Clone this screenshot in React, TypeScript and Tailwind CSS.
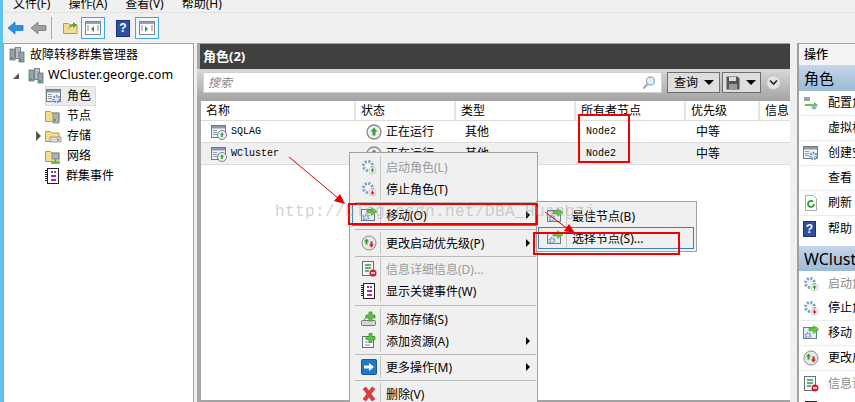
import type { ReactNode } from 'react'

const mono = "font-['Liberation_Mono','Noto_Sans_CJK_SC',monospace]"

function Window({ children }: { children?: ReactNode }) {
  return (
    <svg width="16" height="16" viewBox="0 0 16 16">
      <rect x="0.5" y="1.5" width="14" height="12" fill="#f4f4f4" stroke="#6f7b88" />
      <rect x="1" y="2" width="13" height="2.5" fill="#8d99a6" />
      <rect x="2" y="6" width="4" height="1" fill="#8d99a6" />
      <rect x="2" y="8" width="4" height="1" fill="#8d99a6" />
      <rect x="2" y="10" width="4" height="1" fill="#8d99a6" />
      {children}
    </svg>
  )
}

function RoleRunning() {
  return (
    <Window>
      <circle cx="11" cy="11" r="4.5" fill="#e8eef2" stroke="#75818d" />
      <path d="M11 8.5l2 2.2h-1.2V13h-1.6v-2.3H9z" fill="#2f9a2f" />
    </Window>
  )
}

function RoleGear() {
  return (
    <Window>
      <circle cx="10.5" cy="11" r="3" fill="#dfe9f3" stroke="#6f94b8" strokeWidth="2.4" strokeDasharray="1.6 1" />
    </Window>
  )
}

function MoveIcon() {
  return (
    <svg width="16" height="16" viewBox="0 0 16 16">
      <rect x="0.5" y="2.5" width="13" height="11" fill="#e9edf1" stroke="#6f7b88" />
      <circle cx="5" cy="10.5" r="2.4" fill="#dfe9f3" stroke="#6f94b8" strokeWidth="2" strokeDasharray="1.4 0.9" />
      <path d="M6 3h4.5V0.5L16 4.5l-5.5 4V6H6z" fill="#61c83c" stroke="#3d9a25" strokeWidth="0.5" />
    </svg>
  )
}

function GearBadge({ down }: { down?: boolean }) {
  return (
    <svg width="16" height="16" viewBox="0 0 16 16">
      <circle cx="7" cy="7" r="4.5" fill="#f2f6fa" stroke="#7f9dbd" strokeWidth="3" strokeDasharray="2 1.500" />
      <circle cx="11.5" cy="11.5" r="3.5" fill="#fff" stroke="#c8c8c8" />
      {down ? <path d="M11.5 14l-2.2-2.6h1.4V9.5h1.6v1.9h1.4z" fill="#c8232c" /> : <path d="M11.5 9l2.2 2.6h-1.4v1.9h-1.6v-1.9H9.3z" fill="#2f9a2f" />}
    </svg>
  )
}

function Servers({ w = 16 }: { w?: number }) {
  return (
    <svg width={w} height={w} viewBox="0 0 16 16">
      <rect x="1" y="2" width="5" height="11" fill="#9aa3ab" stroke="#59626a" strokeWidth="0.7" />
      <rect x="6.5" y="0.5" width="5" height="11" fill="#b5bcc3" stroke="#59626a" strokeWidth="0.7" />
      <rect x="10" y="5" width="5" height="10" fill="#9aa3ab" stroke="#59626a" strokeWidth="0.7" />
      <rect x="11" y="12" width="2" height="2" fill="#3db03d" />
      <rect x="2" y="10" width="2" height="2" fill="#3db03d" />
    </svg>
  )
}

function Folder({ children }: { children?: ReactNode }) {
  return (
    <svg width="17" height="16" viewBox="0 0 17 16">
      <path d="M0.5 3.5V13.5H14V5H7L5.5 3.5z" fill="#f5dc8e" stroke="#b99a48" />
      {children}
    </svg>
  )
}

function EventLog() {
  return (
    <svg width="16" height="16" viewBox="0 0 16 16">
      <rect x="2.5" y="0.5" width="11" height="15" fill="#fff" stroke="#222" />
      <path d="M1 2v12" stroke="#222" strokeWidth="2" strokeDasharray="1 1" />
      <rect x="6" y="3" width="2" height="2" fill="#c22" />
      <rect x="9" y="3" width="2" height="2" fill="#36c" />
      <rect x="6" y="7" width="5" height="2" fill="#83c" />
      <rect x="6" y="11" width="5" height="2" fill="#c2a" />
    </svg>
  )
}

function Info() {
  return (
    <svg width="16" height="16" viewBox="0 0 16 16">
      <rect x="1.5" y="0.5" width="11" height="14" fill="#f6f6f6" stroke="#66727e" />
      <path d="M4 4h6M4 7h6M4 10h4" stroke="#3f8f5a" strokeWidth="1.3" />
      <circle cx="12" cy="12" r="3.5" fill="#c8232c" />
      <rect x="10" y="11.3" width="4" height="1.4" fill="#fff" />
    </svg>
  )
}

function Priority() {
  return (
    <svg width="16" height="16" viewBox="0 0 16 16">
      <circle cx="8" cy="8" r="7" fill="#e8e8e8" stroke="#8a8a8a" />
      <path d="M5.5 3.5l2.5 3H6.5v3h-2v-3H3z" fill="#2f9a2f" />
      <path d="M10.5 12.5l-2.5-3h1.500v-3h2v3H13z" fill="#c8232c" />
    </svg>
  )
}

function Help({ size = 16 }: { size?: number }) {
  return (
    <div className="flex items-center justify-center bg-[#2f4f9f] border border-[#1c3474] text-white font-bold text-[12px] leading-none font-['Liberation_Sans',sans-serif]" style={{ width: size - 3, height: size }}>
      ?
    </div>
  )
}

function AddStorage() {
  return (
    <svg width="16" height="16" viewBox="0 0 16 16">
      <rect x="0.5" y="9.500" width="14" height="5" rx="1" fill="#d6d6d6" stroke="#777" />
      <path d="M3 9.500L5 6h4" fill="none" stroke="#777" />
      <path d="M8 1h3v3h3v3h-3v3H8V7H5V4h3z" fill="#5fc43e" stroke="#2f8f22" strokeWidth="0.7" />
    </svg>
  )
}

function AddResource() {
  return (
    <svg width="16" height="16" viewBox="0 0 16 16">
      <rect x="1.500" y="3.500" width="11" height="11" fill="#f6f6f6" stroke="#66727e" />
      <path d="M4 9h5M4 12h5" stroke="#8d99a6" />
      <path d="M8 0.500h3v3h3v3h-3v3H8v-3H5v-3h3z" fill="#5fc43e" stroke="#2f8f22" strokeWidth="0.7" />
    </svg>
  )
}

function MoreOps() {
  return (
    <svg width="16" height="16" viewBox="0 0 16 16">
      <rect x="0.500" y="0.500" width="15" height="15" rx="1" fill="#1f78c8" stroke="#125a9c" />
      <path d="M3 6.500h5V4l5 4-5 4V9.500H3z" fill="#fff" />
    </svg>
  )
}

function Delete() {
  return (
    <svg width="16" height="16" viewBox="0 0 16 16">
      <path d="M2 3l3-2 3 4 3-4 3 2-4 5 4 5-3 2-3-4-3 4-3-2 4-5z" fill="#d8403a" stroke="#a8251f" strokeWidth="0.5" />
    </svg>
  )
}

function Arrow({ color }: { color: string }) {
  return (
    <svg width="18" height="16" viewBox="0 0 18 16">
      <path d="M1 8l7-6v3.500h8v5H8V14z" fill={color} stroke={color === '#a0a0a0' ? '#6d6d6d' : '#1a6cc0'} strokeWidth="0.7" />
    </svg>
  )
}

const SubArrow = () => <span className="ml-auto mr-[6px] w-0 h-0 border-y-[4px] border-y-transparent border-l-[4px] border-l-black" />

function MenuItem({ icon, label, disabled, sub, hot }: { icon: ReactNode; label: string; disabled?: boolean; sub?: boolean; hot?: boolean }) {
  return (
    <div className={`flex items-center h-[22px] ${hot ? 'outline outline-[#3f83b5] -outline-offset-1' : ''}`}>
      <span className="w-[28px] pl-[5px] flex items-center justify-center shrink-0">{icon}</span>
      <span className="w-px h-full bg-[#c4c4c4] mr-[5px] shrink-0" />
      <span className={`text-[12px] pt-[1px] ${disabled ? 'text-[#9a9a9a]' : 'text-black'}`}>{label}</span>
      {sub && <SubArrow />}
    </div>
  )
}

const MenuSep = ({ h }: { h: string }) => (
  <div className={`flex items-center ml-[3px] ${h}`}>
    <div className="h-px w-full bg-[#b8b8b8]" />
  </div>
)

function TreeRow({ indent, icon, label, caret, selected }: { indent: string; icon: ReactNode; label: string; caret?: ReactNode; selected?: boolean }) {
  return (
    <div className={`flex items-center h-[20px] ${indent}`}>
      <span className="w-[14px] flex justify-center shrink-0">{caret}</span>
      <span className={`flex items-center gap-[3px] pr-[4px] h-[20px] ${selected ? 'bg-[#ececec] border border-[#dadada]' : ''}`}>
        {icon}
        <span className="text-[12px] ml-[2px] whitespace-nowrap">{label}</span>
      </span>
    </div>
  )
}

const cols = 'grid grid-cols-[155px_100px_120px_110px_74px_1fr]'

function RoleRow({ name, alt }: { name: string; alt?: boolean }) {
  return (
    <div className={`${cols} h-[22px] items-center border-b border-[#dcdcdc] text-[12px] ${alt ? 'bg-[#f0f0f0]' : 'bg-white'}`}>
      <div className="flex items-center pl-[10px] gap-[4px]">
        <RoleRunning />
        <span className={`${mono} text-[10px]`}>{name}</span>
      </div>
      <div className="flex items-center pl-[10px] gap-[4px]">
        <svg width="16" height="16" viewBox="0 0 16 16">
          <circle cx="8" cy="8" r="7" fill="#eee" stroke="#8a8a8a" strokeWidth="1.300" />
          <path d="M8 3.500l3.500 4H9.500v4h-3v-4h-2z" fill="#3f9f3f" />
        </svg>
        <span>正在运行</span>
      </div>
      <div className="pl-[9px]">其他</div>
      <div className={`pl-[10px] ${mono} text-[10px]`}>Node2</div>
      <div className="pl-[10px]">中等</div>
      <div />
    </div>
  )
}

function ActionRow({ icon, label, muted, line }: { icon?: ReactNode; label: string; muted?: boolean; line?: boolean }) {
  return (
    <div className={`flex items-center h-[25px] pl-[4px] ${line ? 'border-b border-[#ececec]' : ''}`}>
      <span className="w-[25px] flex shrink-0">{icon}</span>
      <span className={`text-[12px] whitespace-nowrap ${muted ? 'text-[#8a8a8a]' : 'text-black'}`}>{label}</span>
    </div>
  )
}

function ToolFrame({ children }: { children: ReactNode }) {
  return <div className="w-[24px] h-[22px] border border-[#3fa9dc] bg-[#eef6fb] flex items-center justify-center">{children}</div>
}

function PaneIcon({ left }: { left?: boolean }) {
  return (
    <svg width="16" height="14" viewBox="0 0 16 14">
      <rect x="0.500" y="0.500" width="15" height="13" fill="#fff" stroke="#7c8790" />
      <rect x="1" y="1" width="14" height="2" fill="#9aa3ab" />
      {left ? <path d="M9 5v6l-3-3z" fill="#2f9a2f" /> : <path d="M6 5v6l3-3z" fill="#2f9a2f" />}
      <path d="M2 5h2M2 7h2M2 9h2M12 5h2M12 7h2M12 9h2" stroke="#7c8790" />
    </svg>
  )
}

export default function App() {
  return (
    <div className="relative w-[855px] h-[402px] overflow-hidden flex bg-[#f0f0f0] text-black font-['Noto_Sans','Noto_Sans_CJK_SC',sans-serif]">
      <div className="w-[3px] bg-[#62c3e8] shrink-0" />
      <div className="flex-1 min-w-0 flex flex-col">
        {/* Menu bar, cut off by the top of the shot */}
        <div className="h-[12px] overflow-hidden flex gap-[18px] pl-[10px] items-end text-[12px] leading-[16px]">
          <span>文件(F)</span>
          <span>操作(A)</span>
          <span>查看(V)</span>
          <span>帮助(H)</span>
        </div>
        <div className="h-[31px] flex items-center border-t border-[#e2e2e2] pl-[4px]">
          <Arrow color="#2f8fe0" />
          <span className="ml-[5px]"><Arrow color="#a0a0a0" /></span>
          <span className="w-px h-[22px] bg-[#a8a8a8] ml-[3px]" />
          <span className="ml-[11px]">
            <Folder>
              <path d="M5 10c1-4 3-6 5-6V2l4 3-4 3V6c-2 0-3 1-5 4z" fill="#3da83d" />
            </Folder>
          </span>
          <span className="ml-[1px]"><ToolFrame><PaneIcon left /></ToolFrame></span>
          <span className="ml-[11px]"><Help size={17} /></span>
          <span className="ml-[5px]"><ToolFrame><PaneIcon /></ToolFrame></span>
        </div>

        <div className="flex-1 min-h-0 flex">
          {/* Tree */}
          <div className="w-[191px] shrink-0 bg-white border-t border-l border-r border-[#a0a0a0] pt-[1px]">
            <div className="flex items-center h-[20px] pl-[5px] gap-[5px]">
              <Servers />
              <span className="text-[12px]">故障转移群集管理器</span>
            </div>
            <div className="flex items-center h-[21px] pl-[9px]">
              <span className="w-0 h-0 border-l-[6px] border-l-transparent border-b-[6px] border-b-[#555] mr-[9px]" />
              <Servers />
              <span className="text-[12.5px] ml-[4px] whitespace-nowrap">WCluster.george.com</span>
            </div>
            <TreeRow indent="pl-[27px]" icon={<RoleGear />} label="角色" selected />
            <TreeRow indent="pl-[27px]" icon={<Folder><rect x="8" y="5" width="6" height="10" fill="#aab2ba" stroke="#666" strokeWidth="0.600" /><rect x="9" y="11" width="2" height="2" fill="#3db03d" /></Folder>} label="节点" />
            <TreeRow
              indent="pl-[27px]"
              icon={<Folder><rect x="5" y="9" width="11" height="5" fill="#d8d8d8" stroke="#777" strokeWidth="0.600" /><rect x="12" y="11" width="2" height="1.500" fill="#3db03d" /></Folder>}
              label="存储"
              caret={<span className="w-0 h-0 border-y-[5px] border-y-transparent border-l-[5px] border-l-[#555]" />}
            />
            <TreeRow indent="pl-[27px]" icon={<Folder><rect x="7" y="5" width="7" height="6" fill="#aab2ba" stroke="#666" strokeWidth="0.600" /><path d="M10.500 11v3M6 15h9" stroke="#2fae3f" strokeWidth="1.300" /></Folder>} label="网络" />
            <TreeRow indent="pl-[27px]" icon={<EventLog />} label="群集事件" />
          </div>

          {/* Middle pane */}
          <div className="ml-[3px] w-[593px] shrink-0 flex flex-col bg-[#a6a6a6] pl-[4px] border-t border-[#a0a0a0]">
            <div className="-ml-[1px] h-[25px] bg-[#404040] text-white font-bold text-[13px] flex items-center pl-[3px] pt-[1px]">角色(2)</div>
            <div className="-ml-[4px] h-[32px] flex pl-[6px] pr-[9px] pt-[3px] pb-[8px] gap-[5px] items-stretch bg-gradient-to-b from-[#d8d8d8] to-[#a3a3a3]">
              <div className="w-[459px] bg-white border border-[#d0d0d0] flex items-center px-[4px] text-[12px] italic text-[#8a8a8a]">
                <span>搜索</span>
                <svg className="ml-auto" width="16" height="16" viewBox="0 0 16 16">
                  <circle cx="9.500" cy="6" r="4" fill="#e4eef6" stroke="#9cb0c0" strokeWidth="1.400" />
                  <path d="M6.500 9L2.500 13.500" stroke="#a8a8a8" strokeWidth="2.200" />
                </svg>
              </div>
              <div className="w-[53px] bg-[#dedede] border border-[#6f6f6f] flex items-center pl-[6px] text-[12px]">
                查询
                <span className="ml-auto mr-[5px] w-0 h-0 border-x-[5px] border-x-transparent border-t-[5px] border-t-black" />
              </div>
              <div className="-ml-[3px] w-[39px] bg-[#dedede] border border-[#6f6f6f] flex items-center pl-[3px]">
                <svg width="14" height="14" viewBox="0 0 14 14">
                  <path d="M0.500 0.500h11l2 2v11h-13z" fill="#555" />
                  <rect x="3" y="1" width="7" height="4" fill="#ddd" />
                  <rect x="3" y="8" width="8" height="5" fill="#999" />
                </svg>
                <span className="ml-auto mr-[4px] w-0 h-0 border-x-[5px] border-x-transparent border-t-[5px] border-t-black" />
              </div>
              <div className="w-[15px] h-[15px] mt-[3px] rounded-full bg-[#e4e4e4] border border-[#bdbdbd] flex items-center justify-center">
                <svg width="9" height="7" viewBox="0 0 9 7"><path d="M1 1.500l3.500 3.500L8 1.500" fill="none" stroke="#222" strokeWidth="1.600" /></svg>
              </div>
            </div>
            <div className="flex-1 bg-white border-b border-[#a0a0a0] mb-[1px]">
              <div className={`${cols} h-[20px] items-center text-[12px] border-b border-[#dcdcdc]`}>
                {['名称', '状态', '类型', '所有者节点', '优先级', '信息'].map((h) => (
                  <div key={h} className="pl-[5px] h-full flex items-center border-r-[2px] border-[#e4e4e4] last:border-r-0">{h}</div>
                ))}
              </div>
              <RoleRow name="SQLAG" />
              <RoleRow name="WCluster" alt />
            </div>
          </div>

          {/* Actions pane */}
          <div className="ml-[7px] flex-1 min-w-0 overflow-hidden border-t border-l-[2px] border-[#a0a0a0] bg-white">
            <div className="h-[21px] bg-[#f4f4f4] flex items-center pl-[5px] text-[12px] font-medium">操作</div>
            <div className="h-[26px] bg-gradient-to-b from-[#c4d6e9] to-[#9dbad8] flex items-center pl-[5px] text-[15px]">角色</div>
            <div>
              <ActionRow icon={<svg width="16" height="16" viewBox="0 0 16 16"><rect x="1" y="2" width="6" height="4" fill="#9aa3ab" /><path d="M2 9h9V7l4 3-4 3v-2H2z" fill="#5fc43e" /><circle cx="11" cy="12" r="2.500" fill="#8fb1d6" /></svg>} label="配置角色..." line />
              <ActionRow label="虚拟机..." line />
              <ActionRow icon={<RoleGear />} label="创建空角色" line />
              <ActionRow label="查看" line />
              <ActionRow icon={<svg width="16" height="16" viewBox="0 0 16 16"><path d="M2.500 0.500h8l3 3v12h-11z" fill="#fff" stroke="#a8a8a8" /><path d="M11 9a3 3 0 1 1-1-2.300" fill="none" stroke="#2f9a2f" strokeWidth="1.800" /></svg>} label="刷新" line />
              <ActionRow icon={<Help size={16} />} label="帮助" />
            </div>
            <div className="mt-[5px] h-[25px] bg-gradient-to-b from-[#c4d6e9] to-[#9dbad8] flex items-center pl-[5px] text-[16px] whitespace-nowrap">WCluster</div>
            <div>
              <ActionRow icon={<GearBadge />} label="启动角色" muted />
              <ActionRow icon={<GearBadge down />} label="停止角色" line />
              <ActionRow icon={<MoveIcon />} label="移动" line />
              <ActionRow icon={<Priority />} label="更改启动" line />
              <ActionRow icon={<Info />} label="信息详细" muted />
              <ActionRow icon={<EventLog />} label="显示关键" />
            </div>
          </div>
        </div>
      </div>

      {/* Context menu */}
      <div className="absolute left-[349px] top-[152px] w-[189px] h-[260px] bg-[#f0f0f0] border border-[#a0a0a0] pt-[3px] pl-[2px] pr-[1px]">
        <MenuItem icon={<GearBadge />} label="启动角色(L)" disabled />
        <MenuItem icon={<GearBadge down />} label="停止角色(T)" />
        <MenuSep h="h-[4px]" />
        <MenuItem icon={<MoveIcon />} label="移动(O)" sub hot />
        <MenuSep h="h-[6px]" />
        <MenuItem icon={<Priority />} label="更改启动优先级(P)" sub />
        <MenuSep h="h-[4px]" />
        <MenuItem icon={<Info />} label="信息详细信息(D)..." disabled />
        <MenuItem icon={<EventLog />} label="显示关键事件(W)" />
        <MenuSep h="h-[6px]" />
        <MenuItem icon={<AddStorage />} label="添加存储(S)" />
        <MenuItem icon={<AddResource />} label="添加资源(A)" sub />
        <MenuSep h="h-[4px]" />
        <MenuItem icon={<MoreOps />} label="更多操作(M)" sub />
        <MenuSep h="h-[5px]" />
        <MenuItem icon={<Delete />} label="删除(V)" />
      </div>

      {/* Submenu */}
      <div className="absolute left-[536px] top-[201px] w-[161px] h-[51px] bg-[#f0f0f0] border border-[#a0a0a0] pt-[3px] pl-[1px] pr-[2px]">
        <MenuItem icon={<MoveIcon />} label="最佳节点(B)" />
        <MenuItem icon={<MoveIcon />} label="选择节点(S)..." hot />
      </div>

      {/* Red annotations added on the screenshot */}
      <div className="absolute left-[348px] top-[203px] w-[190px] h-[22px] border-[2px] border-[#ee0000]" />
      <div className="absolute left-[533px] top-[232px] w-[147px] h-[23px] border-[2px] border-[#ee0000]" />
      <div className="absolute left-[578px] top-[114px] w-[52px] h-[49px] border-[2px] border-[#ee0000]" />
      <svg className="absolute left-0 top-0" width="855" height="402" viewBox="0 0 855 402">
        <path d="M289 157L338 198" stroke="#e00000" />
        <path d="M345 204l-11-3 6-7z" fill="#e00000" />
        <path d="M545 212L568 229" stroke="#e00000" />
        <path d="M575 233l-11-2 5-7z" fill="#e00000" />
      </svg>

      {/* Blog watermark */}
      <div className="absolute left-[275px] top-[202px] text-[16px] leading-[20px] tracking-[0.4px] text-[#9a9a9a]/45 whitespace-nowrap font-['Liberation_Mono',monospace]">
        http://blog.csdn.net/DBA_Huangzj
      </div>
    </div>
  )
}
